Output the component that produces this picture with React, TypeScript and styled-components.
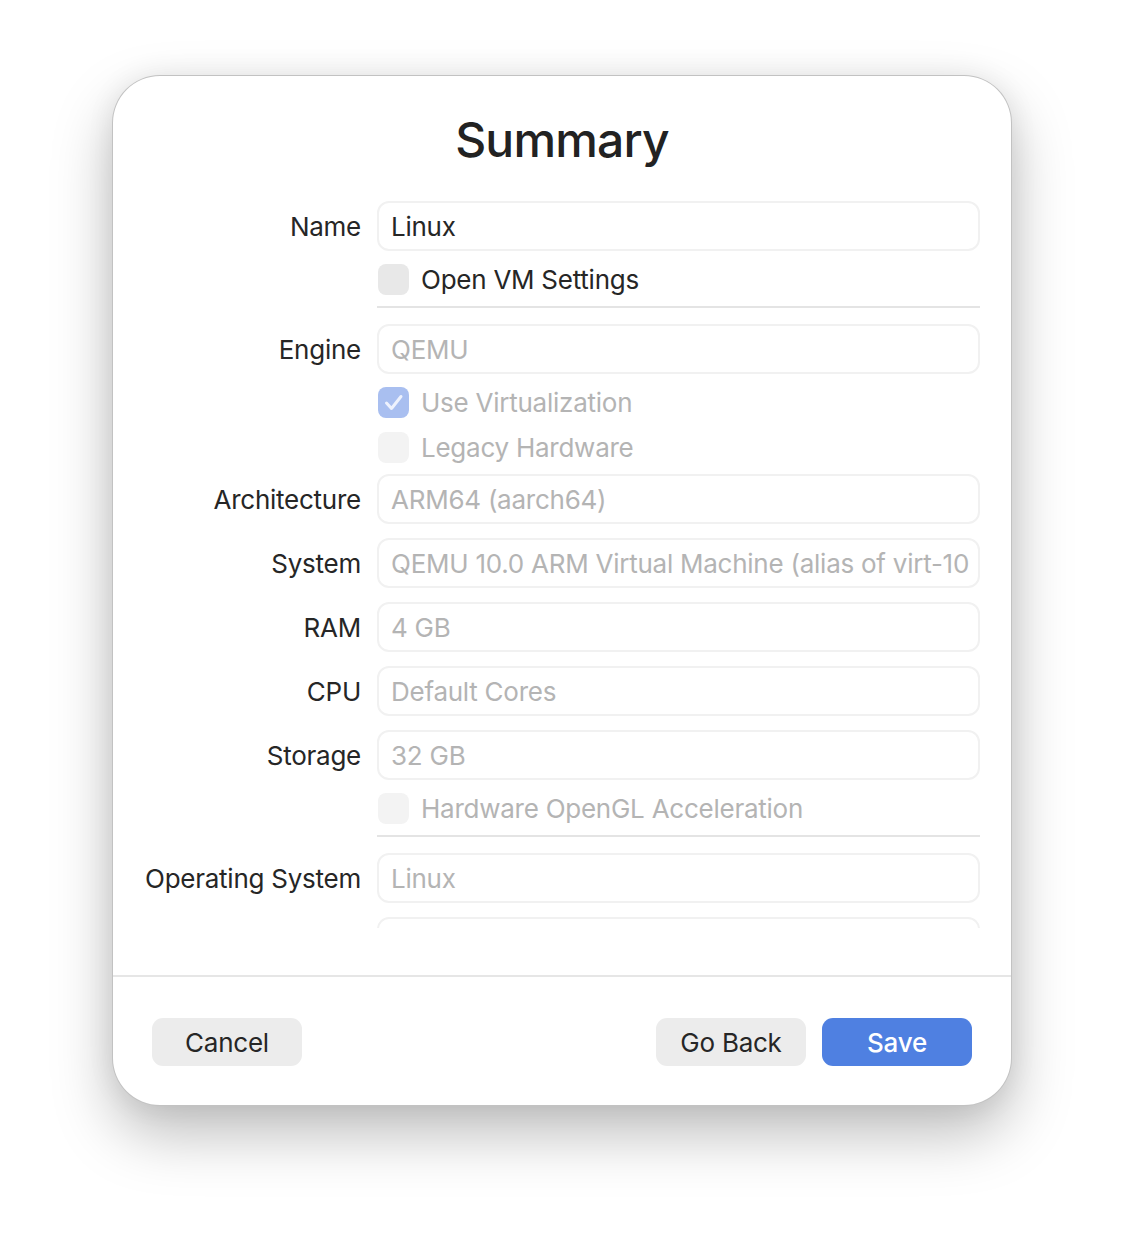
import React from "react";
import styled, { createGlobalStyle } from "styled-components";

const GlobalStyle = createGlobalStyle`
  html, body {
    margin: 0;
    padding: 0;
    background: #ffffff;
    font-family: Inter, "Noto Sans", "Liberation Sans", sans-serif;
    -webkit-font-smoothing: antialiased;
  }
  * { box-sizing: border-box; }
`;

const Page = styled.div`
  width: 1124px;
  height: 1254px;
  padding: 75px 0 0 112px;
`;

const Window = styled.div`
  width: 900px;
  height: 1031px;
  background: #ffffff;
  border: 1px solid rgba(0, 0, 0, 0.24);
  border-radius: 48px;
  box-shadow: 0 28px 60px rgba(0, 0, 0, 0.26), 0 0 28px rgba(0, 0, 0, 0.07);
  display: flex;
  flex-direction: column;
  overflow: hidden;
`;

const Header = styled.div`
  height: 109px;
  padding-top: 33px;
  display: flex;
  justify-content: center;
`;

const Title = styled.h1`
  margin: 0;
  font-size: 48px;
  line-height: 62px;
  font-weight: 500;
  color: #222222;
  letter-spacing: -0.8px;
`;

const Scroll = styled.div`
  height: 743px;
  overflow: hidden;
  padding: 16px 31px 0 0;
`;

const Label = styled.div`
  font-size: 26px;
  color: #262626;
  text-align: right;
  white-space: nowrap;
  letter-spacing: -0.25px;
`;

const Row = styled.div`
  display: grid;
  grid-template-columns: 248px 603px;
  column-gap: 16px;
  align-items: center;
`;

const FieldRow = styled(Row)`
  height: 50px;
`;

const CheckRow = styled(Row)`
  height: 44px;
`;

const RuleRow = styled(Row)`
  height: 2px;
`;

const Form = styled.div`
  display: flex;
  flex-direction: column;

  & > ${FieldRow} + ${FieldRow} { margin-top: 14px; }
  & > ${FieldRow} + ${CheckRow} { margin-top: 6px; }
  & > ${CheckRow} + ${CheckRow} { margin-top: 1px; }
  & > ${CheckRow} + ${FieldRow} { margin-top: 5px; }
  & > ${CheckRow} + ${RuleRow} { margin-top: 5px; }
  & > ${RuleRow} + ${FieldRow} { margin-top: 16px; }
`;

const Field = styled.div<{ $disabled?: boolean }>`
  height: 50px;
  border: 2px solid #f1f1f1;
  border-radius: 12px;
  padding: 0 6px 0 12px;
  display: flex;
  align-items: center;
  font-size: 26px;
  color: ${(p) => (p.$disabled ? "#b4b4b4" : "#262626")};
  white-space: nowrap;
  overflow: hidden;
  letter-spacing: -0.25px;
`;

const FieldText = styled.span`
  display: block;
  width: 100%;
`;

const Rule = styled.div`
  grid-column: 2;
  height: 2px;
  background: #e4e4e4;
`;

const CheckLine = styled.label<{ $disabled?: boolean }>`
  grid-column: 2;
  display: flex;
  align-items: center;
  gap: 12px;
  padding-left: 1px;
  font-size: 26px;
  color: ${(p) => (p.$disabled ? "#b4b4b4" : "#262626")};
  letter-spacing: -0.25px;
  white-space: nowrap;
`;

const Box = styled.span<{ $checked?: boolean; $disabled?: boolean }>`
  width: 31px;
  height: 31px;
  flex: none;
  border-radius: 8px;
  display: flex;
  align-items: center;
  justify-content: center;
  background: ${(p) =>
    p.$checked ? "#a9bff0" : p.$disabled ? "#f3f3f3" : "#e8e8e8"};
`;

const Spacer = styled.div`
  flex: 1;
`;

const FooterRule = styled.div`
  height: 2px;
  background: #e6e6e6;
`;

const Footer = styled.div`
  display: flex;
  align-items: center;
  gap: 16px;
  padding: 41px 39px 39px 39px;
`;

const Button = styled.button<{ $primary?: boolean }>`
  width: 150px;
  height: 48px;
  border: none;
  border-radius: 11px;
  font-family: inherit;
  font-size: 26px;
  letter-spacing: -0.25px;
  background: ${(p) => (p.$primary ? "#4f80e1" : "#ececec")};
  color: ${(p) => (p.$primary ? "#ffffff" : "#262626")};
  font-weight: ${(p) => (p.$primary ? 500 : 400)};
  padding: 0;
`;

const FooterGap = styled.div`
  flex: 1;
`;

function Checkmark() {
  return (
    <svg width="31" height="31" viewBox="0 0 31 31" aria-hidden>
      <polyline
        points="8.5,16 13.5,21.5 23,9.5"
        fill="none"
        stroke="#eef2fd"
        strokeWidth="3"
        strokeLinecap="round"
        strokeLinejoin="round"
      />
    </svg>
  );
}

function TextField({ label, value, disabled }: { label: string; value: string; disabled?: boolean }) {
  return (
    <FieldRow>
      <Label>{label}</Label>
      <Field $disabled={disabled}>
        <FieldText>{value}</FieldText>
      </Field>
    </FieldRow>
  );
}

function Check({ text, checked, disabled }: { text: string; checked?: boolean; disabled?: boolean }) {
  return (
    <CheckRow>
      <CheckLine $disabled={disabled}>
        <Box $checked={checked} $disabled={disabled}>
          {checked && <Checkmark />}
        </Box>
        {text}
      </CheckLine>
    </CheckRow>
  );
}

function Separator() {
  return (
    <RuleRow>
      <Rule />
    </RuleRow>
  );
}

export default function App() {
  return (
    <Page>
      <GlobalStyle />
      <Window>
        <Header>
          <Title>Summary</Title>
        </Header>
        <Scroll>
          <Form>
            <TextField label="Name" value="Linux" />
            <Check text="Open VM Settings" />
            <Separator />
            <TextField label="Engine" value="QEMU" disabled />
            <Check text="Use Virtualization" checked disabled />
            <Check text="Legacy Hardware" disabled />
            <TextField label="Architecture" value="ARM64 (aarch64)" disabled />
            <TextField
              label="System"
              value="QEMU 10.0 ARM Virtual Machine (alias of virt-10"
              disabled
            />
            <TextField label="RAM" value="4 GB" disabled />
            <TextField label="CPU" value="Default Cores" disabled />
            <TextField label="Storage" value="32 GB" disabled />
            <Check text="Hardware OpenGL Acceleration" disabled />
            <Separator />
            <TextField label="Operating System" value="Linux" disabled />
            <TextField label="" value="" disabled />
          </Form>
        </Scroll>
        <Spacer />
        <FooterRule />
        <Footer>
          <Button>Cancel</Button>
          <FooterGap />
          <Button>Go Back</Button>
          <Button $primary>Save</Button>
        </Footer>
      </Window>
    </Page>
  );
}
